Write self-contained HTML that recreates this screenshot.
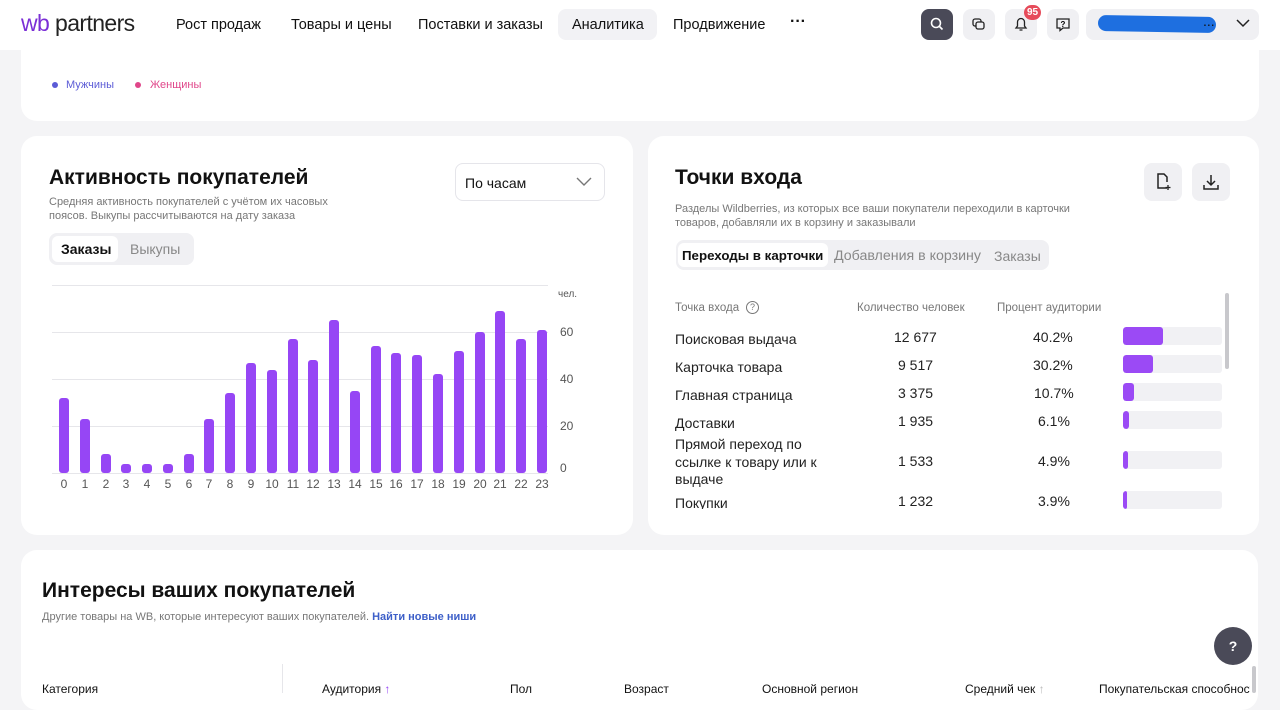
<!DOCTYPE html>
<html><head><meta charset="utf-8"><style>
*{box-sizing:border-box;margin:0;padding:0}
body{width:1280px;height:693px;overflow:hidden;background:#f4f4f6;font-family:"Liberation Sans",sans-serif;color:#111;position:relative}
.a{position:absolute}
.card{position:absolute;background:#fff;border-radius:16px}
.nav{font-size:14.5px;color:#111;top:17px}
.ib{position:absolute;top:9px;width:32px;height:31px;border-radius:8px;background:#f0f0f3}
.g{color:#777;font-size:11px;line-height:14px}
.row{position:absolute;font-size:14px;color:#222}
.bar{position:absolute;left:1123px;width:99px;height:18px;background:#f1f1f4;border-radius:3px;overflow:hidden}
.bar i{position:absolute;left:0;top:0;bottom:0;background:#9b4af5;border-radius:3px}
</style></head><body>
<!-- header -->
<div class="a" style="left:0;top:0;width:1280px;height:50px;background:#fff"></div>
<div class="a" style="left:21px;top:10px;font-size:23px;letter-spacing:-0.6px"><span style="color:#7b2fd6">wb</span> <span style="color:#222">partners</span></div>
<div class="a nav" style="left:176px">Рост продаж</div>
<div class="a nav" style="left:291px">Товары и цены</div>
<div class="a nav" style="left:418px">Поставки и заказы</div>
<div class="a" style="left:558px;top:9px;width:99px;height:31px;background:#f2f2f5;border-radius:8px"></div>
<div class="a nav" style="left:572px">Аналитика</div>
<div class="a nav" style="left:673px">Продвижение</div>
<div class="a" style="left:790px;top:13px;font-size:16px;font-weight:bold">···</div>
<div class="ib" style="left:921px;background:#4a4a58"><svg width="32" height="31"><circle cx="15" cy="14" r="4.5" fill="none" stroke="#fff" stroke-width="1.6"/><path d="M18.5 17.5l3 3" stroke="#fff" stroke-width="1.6"/></svg></div>
<div class="ib" style="left:963px"><svg width="32" height="31"><rect x="10" y="10" width="8" height="7" rx="2" fill="none" stroke="#222" stroke-width="1.3"/><rect x="13" y="13" width="8" height="7" rx="2" fill="#f0f0f3" stroke="#222" stroke-width="1.3"/></svg></div>
<div class="ib" style="left:1005px"><svg width="32" height="31"><path d="M11 19h10l-1.5-2v-4a3.5 3.5 0 0 0-7 0v4z M14.5 21h3" fill="none" stroke="#222" stroke-width="1.3"/></svg></div>
<div class="a" style="left:1024px;top:5px;width:17px;height:15px;border-radius:8px;background:#e64b5a;color:#fff;font-size:10px;font-weight:bold;text-align:center;line-height:15px">95</div>
<div class="ib" style="left:1047px"><svg width="32" height="31"><path d="M10 10h12v9h-6l-3 2.5v-2.5h-3z" fill="none" stroke="#222" stroke-width="1.3"/><text x="16" y="18" font-size="8" text-anchor="middle" font-family="Liberation Sans" font-weight="bold">?</text></svg></div>
<div class="a" style="left:1086px;top:9px;width:173px;height:31px;border-radius:8px;background:#f0f0f3"></div>
<div class="a" style="left:1098px;top:16px;width:118px;height:16px;border-radius:8px;background:#1e6fe0;transform:rotate(1deg)"></div>
<div class="a" style="left:1203px;top:13px;font-size:14px">...</div>
<svg class="a" style="left:1235px;top:17px" width="16" height="12"><path d="M2 3l6 6 6-6" fill="none" stroke="#222" stroke-width="1.5"/></svg>

<!-- top card -->
<div class="card" style="left:21px;top:40px;width:1238px;height:81px;border-radius:0 0 16px 16px"></div>
<div class="a" style="left:52px;top:82px;width:6px;height:6px;border-radius:3px;background:#5b5bd6"></div>
<div class="a" style="left:66px;top:79px;font-size:11px;color:#5b5bd6">Мужчины</div>
<div class="a" style="left:135px;top:82px;width:6px;height:6px;border-radius:3px;background:#e0468a"></div>
<div class="a" style="left:150px;top:79px;font-size:11px;color:#e0468a">Женщины</div>

<!-- left card -->
<div class="card" style="left:21px;top:136px;width:612px;height:399px"></div>
<div class="a" style="left:49px;top:166px;font-size:21px;font-weight:bold">Активность покупателей</div>
<div class="a g" style="left:49px;top:195px;width:320px">Средняя активность покупателей с учётом их часовых поясов. Выкупы рассчитываются на дату заказа</div>
<div class="a" style="left:455px;top:163px;width:150px;height:38px;border:1px solid #e5e5ea;border-radius:8px"></div>
<div class="a" style="left:465px;top:175px;font-size:14px">По часам</div>
<svg class="a" style="left:575px;top:176px" width="18" height="12"><path d="M2 2l7 7 7-7" fill="none" stroke="#777" stroke-width="1.4"/></svg>
<div class="a" style="left:49px;top:233px;width:145px;height:32px;border-radius:8px;background:#f0f0f3"></div>
<div class="a" style="left:52px;top:236px;width:66px;height:26px;border-radius:6px;background:#fff"></div>
<div class="a" style="left:61px;top:241px;font-size:14px;font-weight:bold">Заказы</div>
<div class="a" style="left:130px;top:241px;font-size:14px;color:#888">Выкупы</div>
<svg class="a" style="left:0;top:0" width="640" height="540">
<g stroke="#e6e6ea" stroke-width="1"><line x1="52" y1="285.5" x2="548" y2="285.5"/><line x1="52" y1="332.5" x2="548" y2="332.5"/><line x1="52" y1="379.5" x2="548" y2="379.5"/><line x1="52" y1="426.5" x2="548" y2="426.5"/><line x1="52" y1="473.5" x2="548" y2="473.5"/></g>
<g fill="#9646f5">
<rect x="59" y="398" width="10" height="75" rx="3"/><rect x="80" y="419" width="10" height="54" rx="3"/><rect x="101" y="454" width="10" height="19" rx="3"/><rect x="121" y="464" width="10" height="9" rx="3"/><rect x="142" y="464" width="10" height="9" rx="3"/><rect x="163" y="464" width="10" height="9" rx="3"/><rect x="184" y="454" width="10" height="19" rx="3"/><rect x="204" y="419" width="10" height="54" rx="3"/><rect x="225" y="393" width="10" height="80" rx="3"/><rect x="246" y="363" width="10" height="110" rx="3"/><rect x="267" y="370" width="10" height="103" rx="3"/><rect x="288" y="339" width="10" height="134" rx="3"/><rect x="308" y="360" width="10" height="113" rx="3"/><rect x="329" y="320" width="10" height="153" rx="3"/><rect x="350" y="391" width="10" height="82" rx="3"/><rect x="371" y="346" width="10" height="127" rx="3"/><rect x="391" y="353" width="10" height="120" rx="3"/><rect x="412" y="355" width="10" height="118" rx="3"/><rect x="433" y="374" width="10" height="99" rx="3"/><rect x="454" y="351" width="10" height="122" rx="3"/><rect x="475" y="332" width="10" height="141" rx="3"/><rect x="495" y="311" width="10" height="162" rx="3"/><rect x="516" y="339" width="10" height="134" rx="3"/><rect x="537" y="330" width="10" height="143" rx="3"/>
</g>
<g font-family="Liberation Sans" font-size="12" fill="#555" text-anchor="middle">
<text x="64" y="488">0</text><text x="85" y="488">1</text><text x="106" y="488">2</text><text x="126" y="488">3</text><text x="147" y="488">4</text><text x="168" y="488">5</text><text x="189" y="488">6</text><text x="209" y="488">7</text><text x="230" y="488">8</text><text x="251" y="488">9</text><text x="272" y="488">10</text><text x="293" y="488">11</text><text x="313" y="488">12</text><text x="334" y="488">13</text><text x="355" y="488">14</text><text x="376" y="488">15</text><text x="396" y="488">16</text><text x="417" y="488">17</text><text x="438" y="488">18</text><text x="459" y="488">19</text><text x="480" y="488">20</text><text x="500" y="488">21</text><text x="521" y="488">22</text><text x="542" y="488">23</text>
</g>
<g font-family="Liberation Sans" font-size="12" fill="#555"><text x="558" y="297" font-size="10">чел.</text><text x="560" y="336">60</text><text x="560" y="383">40</text><text x="560" y="430">20</text><text x="560" y="472">0</text></g>
</svg>

<!-- right card -->
<div class="card" style="left:648px;top:136px;width:611px;height:399px;overflow:hidden"></div>
<div class="a" style="left:675px;top:166px;font-size:21px;font-weight:bold">Точки входа</div>
<div class="a" style="left:1144px;top:163px;width:38px;height:38px;border-radius:8px;background:#f0f0f3"></div>
<svg class="a" style="left:1144px;top:163px" width="38" height="38"><path d="M23 25h-9v-14h6l3 3v5" fill="none" stroke="#222" stroke-width="1.5"/><path d="M24 22v5M21.5 24.5h5" stroke="#222" stroke-width="1.3"/></svg>
<div class="a" style="left:1192px;top:163px;width:38px;height:38px;border-radius:8px;background:#f0f0f3"></div>
<svg class="a" style="left:1192px;top:163px" width="38" height="38"><path d="M19 12v10M15 18l4 4 4-4M12 22v4h14v-4" fill="none" stroke="#222" stroke-width="1.5"/></svg>
<div class="a g" style="left:675px;top:202px;width:440px">Разделы Wildberries, из которых все ваши покупатели переходили в карточки товаров, добавляли их в корзину и заказывали</div>
<div class="a" style="left:676px;top:240px;width:373px;height:30px;border-radius:8px;background:#f0f0f3"></div>
<div class="a" style="left:678px;top:243px;width:150px;height:24px;border-radius:6px;background:#fff"></div>
<div class="a" style="left:682px;top:248px;font-size:13.3px;font-weight:bold">Переходы в карточки</div>
<div class="a" style="left:834px;top:248px;font-size:14.2px;color:#888">Добавления в корзину</div>
<div class="a" style="left:994px;top:248px;font-size:14px;color:#888">Заказы</div>
<div class="a g" style="left:675px;top:301px;font-size:11.5px">Точка входа</div>
<div class="a" style="left:746px;top:301px;width:13px;height:13px;border:1px solid #777;border-radius:7px;font-size:9px;color:#777;text-align:center;line-height:11px">?</div>
<div class="a g" style="left:857px;top:301px;font-size:11.5px">Количество человек</div>
<div class="a g" style="left:997px;top:301px;font-size:11.5px">Процент аудитории</div>
<div class="a" style="left:1225px;top:293px;width:4px;height:76px;border-radius:2px;background:#c8c8cc"></div>
<div class="a" style="left:648px;top:320px;width:611px;height:189px;overflow:hidden">
<div style="position:absolute;left:-648px;top:-320px;width:1280px;height:520px">
<div class="row" style="left:675px;top:331px">Поисковая выдача</div><div class="row" style="left:894px;top:329px">12 677</div><div class="row" style="left:1033px;top:329px">40.2%</div><div class="bar" style="top:327px"><i style="width:40px"></i></div>
<div class="row" style="left:675px;top:359px">Карточка товара</div><div class="row" style="left:898px;top:357px">9 517</div><div class="row" style="left:1033px;top:357px">30.2%</div><div class="bar" style="top:355px"><i style="width:30px"></i></div>
<div class="row" style="left:675px;top:387px">Главная страница</div><div class="row" style="left:898px;top:385px">3 375</div><div class="row" style="left:1034px;top:385px">10.7%</div><div class="bar" style="top:383px"><i style="width:11px"></i></div>
<div class="row" style="left:675px;top:415px">Доставки</div><div class="row" style="left:898px;top:413px">1 935</div><div class="row" style="left:1038px;top:413px">6.1%</div><div class="bar" style="top:411px"><i style="width:6px"></i></div>
<div class="row" style="left:675px;top:436px;line-height:17.5px;width:160px">Прямой переход по ссылке к товару или к выдаче</div><div class="row" style="left:898px;top:453px">1 533</div><div class="row" style="left:1038px;top:453px">4.9%</div><div class="bar" style="top:451px"><i style="width:5px"></i></div>
<div class="row" style="left:675px;top:495px">Покупки</div><div class="row" style="left:898px;top:493px">1 232</div><div class="row" style="left:1038px;top:493px">3.9%</div><div class="bar" style="top:491px"><i style="width:4px"></i></div>
</div></div>

<!-- bottom card -->
<div class="card" style="left:21px;top:550px;width:1237px;height:160px"></div>
<div class="a" style="left:42px;top:579px;font-size:21px;font-weight:bold">Интересы ваших покупателей</div>
<div class="a g" style="left:42px;top:610px">Другие товары на WB, которые интересуют ваших покупателей. <span style="color:#3d5fc8;font-weight:bold">Найти новые ниши</span></div>
<div class="a" style="left:282px;top:664px;width:1px;height:29px;background:#e6e6ea"></div>
<div class="a" style="left:1214px;top:627px;width:38px;height:38px;border-radius:19px;background:#4a4a58;color:#fff;font-size:14px;font-weight:bold;text-align:center;line-height:38px">?</div>
<div class="a" style="left:1252px;top:666px;width:4px;height:27px;border-radius:2px;background:#c8c8cc"></div>
<div class="a" style="left:42px;top:682px;font-size:12px">Категория</div>
<div class="a" style="left:322px;top:682px;font-size:12px">Аудитория <span style="color:#9646f5">↑</span></div>
<div class="a" style="left:510px;top:682px;font-size:12px">Пол</div>
<div class="a" style="left:624px;top:682px;font-size:12px">Возраст</div>
<div class="a" style="left:762px;top:682px;font-size:12px">Основной регион</div>
<div class="a" style="left:965px;top:682px;font-size:12px">Средний чек <span style="color:#bbb">↑</span></div>
<div class="a" style="left:1099px;top:682px;font-size:12px;white-space:nowrap;width:151px;overflow:hidden">Покупательская способность</div>
</body></html>
